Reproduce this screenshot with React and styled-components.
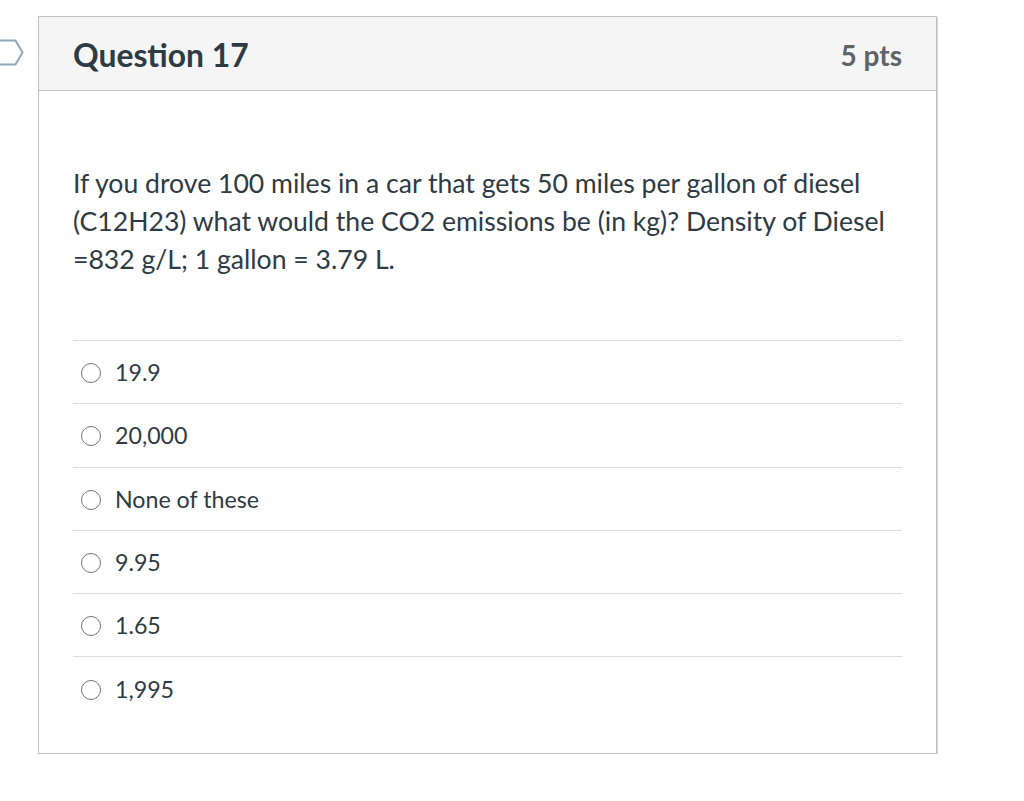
import React from "react";
import styled, { createGlobalStyle } from "styled-components";

const Global = createGlobalStyle`
  html, body { margin: 0; padding: 0; background: #ffffff; }
  body { font-family: Lato, "Open Sans", "Liberation Sans", sans-serif; color: #2d3b45; }
`;

const Page = styled.div`
  display: flex;
  align-items: flex-start;
  padding-top: 16px;
`;

const FlagSlot = styled.div`
  width: 38px;
  flex: 0 0 38px;
  padding-top: 23px;
  display: flex;
`;

const Card = styled.section`
  width: 897px;
  border: 1px solid #c2c2c2;
  box-shadow: 1px 1px 0 #d6d6d6;
  background: #fff;
`;

const Header = styled.header`
  height: 74px;
  box-sizing: border-box;
  padding: 0 34px;
  display: flex;
  align-items: center;
  justify-content: space-between;
  background: #f5f5f5;
  border-bottom: 1px solid #c2c2c2;
`;

const Title = styled.h2`
  margin: 0;
  font-size: 31.8px;
  font-weight: 700;
  color: #2d3b45;
  padding-top: 2px;
`;

const Points = styled.span`
  font-size: 28px;
  font-weight: 700;
  color: #5f6368;
  padding-top: 2px;
`;

const Body = styled.div`
  padding: 73px 34px 33px;
`;

const QuestionText = styled.p`
  margin: 0 0 62px;
  font-size: 26.6px;
  line-height: 38px;
  color: #2d3b45;
`;

const Answers = styled.div`
  display: flex;
  flex-direction: column;
`;

const Answer = styled.label`
  display: flex;
  align-items: center;
  height: 62.3px;
  border-top: 1px solid #dcdcdc;
  padding-left: 8px;
  gap: 14px;
  font-size: 23.2px;
  color: #2d3b45;
  cursor: pointer;
`;

const Radio = styled.span`
  box-sizing: border-box;
  width: 20px;
  height: 20px;
  border: 1.6px solid #737373;
  border-radius: 50%;
  flex: 0 0 auto;
  margin-top: 2px;
`;

const Flag = () => (
  <svg width="24" height="28" viewBox="0 0 24 28" fill="none">
    <path d="M-4 1.5 H15.5 L22.5 13.5 L15.5 25.5 H-4" stroke="#8fa8bc" strokeWidth="2" strokeLinejoin="round" />
  </svg>
);

const answers = ["19.9", "20,000", "None of these", "9.95", "1.65", "1,995"];

export default function App() {
  return (
    <Page>
      <Global />
      <FlagSlot>
        <Flag />
      </FlagSlot>
      <Card>
        <Header>
          <Title>Question 17</Title>
          <Points>5 pts</Points>
        </Header>
        <Body>
          <QuestionText>
            If you drove 100 miles in a car that gets 50 miles per gallon of diesel (C12H23) what would the CO2 emissions be (in kg)? Density of Diesel =832 g/L; 1 gallon = 3.79 L.
          </QuestionText>
          <Answers>
            {answers.map((a) => (
              <Answer key={a}>
                <Radio />
                {a}
              </Answer>
            ))}
          </Answers>
        </Body>
      </Card>
    </Page>
  );
}
